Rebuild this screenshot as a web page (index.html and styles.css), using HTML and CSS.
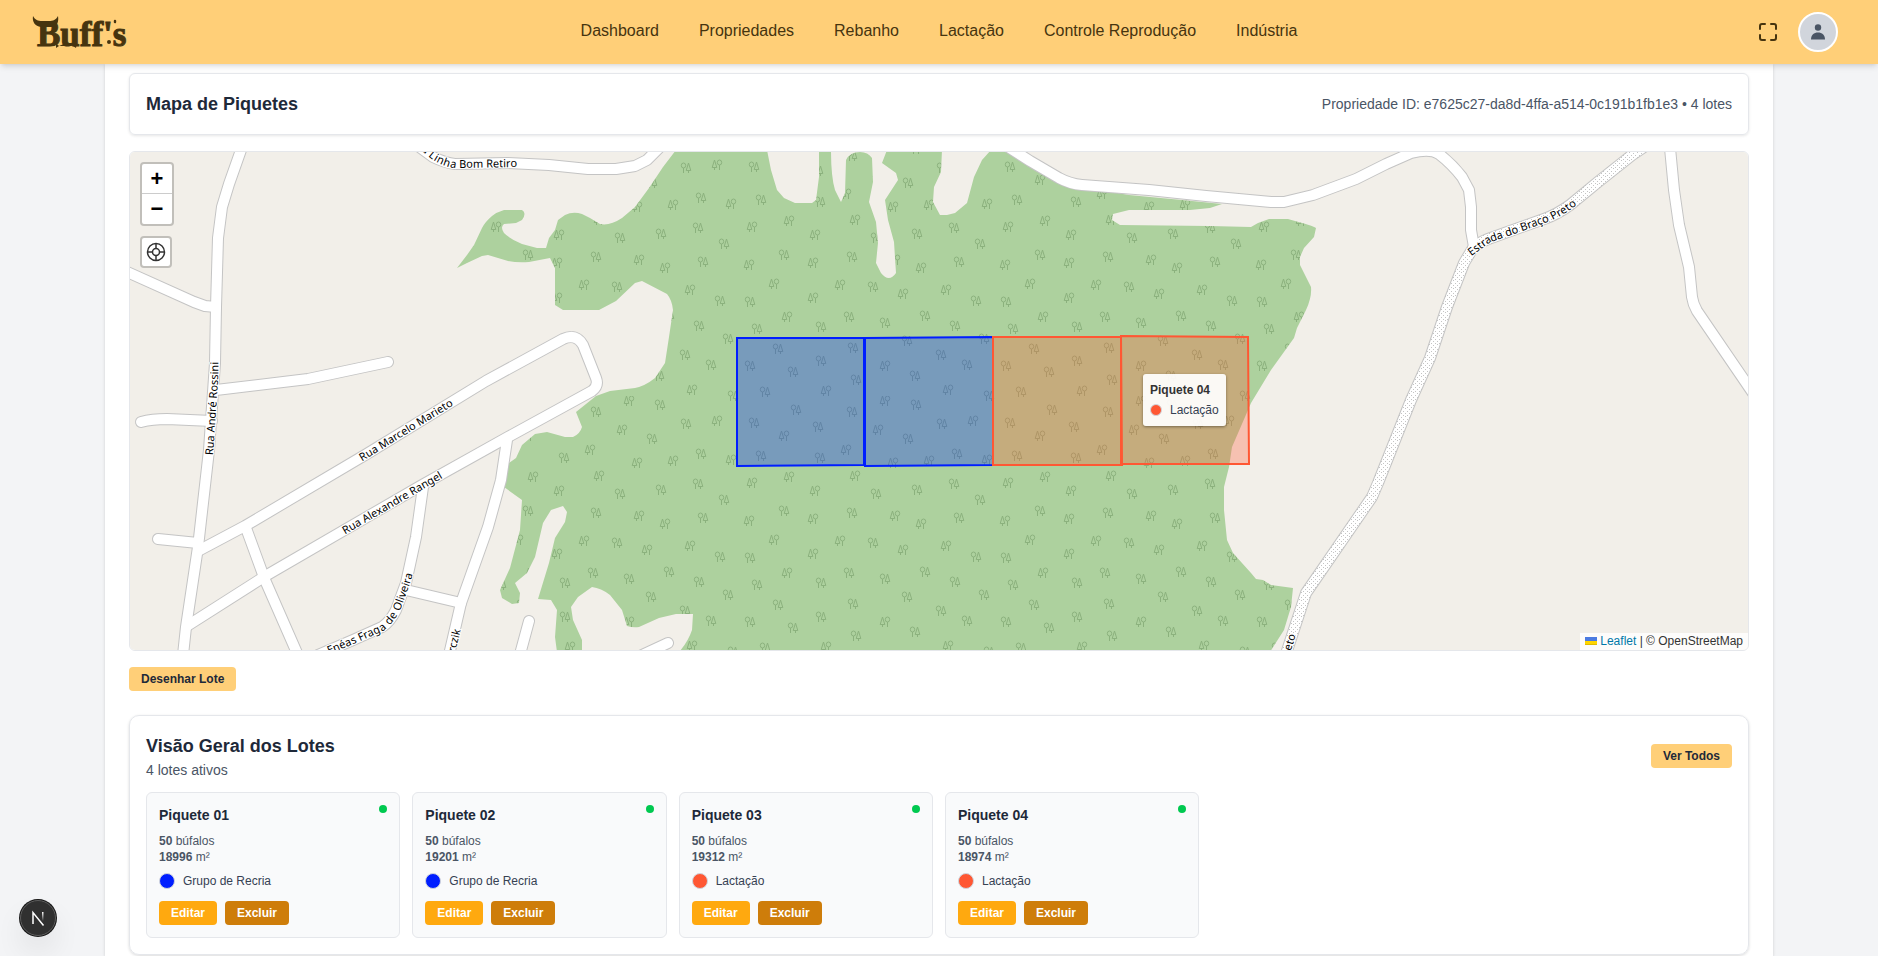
FILE: index.html
```html
<!DOCTYPE html>
<html lang="pt-BR">
<head>
<meta charset="utf-8">
<meta name="viewport" content="width=device-width, initial-scale=1">
<title>Buff's</title>
<link rel="stylesheet" href="styles.css">
</head>
<body>
<header class="topbar">
  <a class="logo" href="#" aria-label="Buff's">
    <svg width="100" height="44" viewBox="0 0 100 44">
      <path d="M1 6C3 10 6 11 10 11H17C21 11 24 10 26 6C27 12 25 16 21 17L9 17C3 16 0 12 1 6Z"/>
      <text x="5" y="36">Buff's</text>
      <path d="M24 33L27 36 34 33 41 36 45 33 44 38 41 36H27L24 38Z"/>
      <path d="M82 10q3-1 2 3-3 1-2-3zM75 32a2 2 0 1 0 4 0 2 2 0 1 0-4 0z"/>
    </svg>
  </a>
  <nav class="nav">
    <a href="#">Dashboard</a>
    <a href="#">Propriedades</a>
    <a href="#">Rebanho</a>
    <a href="#">Lactação</a>
    <a href="#">Controle Reprodução</a>
    <a href="#">Indústria</a>
  </nav>
  <div class="actions">
    <button class="icon-btn" type="button" aria-label="Tela cheia">
      <svg width="24" height="24" viewBox="0 0 24 24" fill="none" stroke="currentColor" stroke-width="2" stroke-linecap="round" stroke-linejoin="round"><path d="M9 4H6a2 2 0 0 0-2 2v3M15 4h3a2 2 0 0 1 2 2v3M4 15v3a2 2 0 0 0 2 2h3M20 15v3a2 2 0 0 1-2 2h-3"/></svg>
    </button>
    <button class="avatar" type="button" aria-label="Perfil">
      <svg width="18" height="18" viewBox="0 0 18 18" fill="currentColor"><circle cx="9" cy="4.5" r="3.2"/><path d="M2 16.5C2 12 5 9.500 9 9.500S16 12 16 16.500Z"/></svg>
    </button>
  </div>
</header>

<div class="page">
<main class="content">
  <section class="bar-card">
    <h2 class="title">Mapa de Piquetes</h2>
    <p class="muted">Propriedade ID: e7625c27-da8d-4ffa-a514-0c191b1fb1e3 • 4 lotes</p>
  </section>

  <section class="map" aria-label="Mapa">
    <svg class="map-canvas" viewBox="130 152 1618 498" preserveAspectRatio="xMidYMid slice">
      <defs>
        <g id="a"><ellipse cx="-2.500" cy="-2.500" rx="2.200" ry="2.500"/><path d="M-2.500 0V5M2.500 -5L0.200 2.500H4.800ZM2.500 2.500V5"/></g>
        <g id="b"><ellipse cx="2.500" cy="-2.500" rx="2.200" ry="2.500"/><path d="M2.500 0V5M-2.500 -5L-4.800 2.500H-0.200ZM-2.500 2.500V5"/></g>
        <pattern id="trees" width="256" height="256" patternUnits="userSpaceOnUse" patternTransform="translate(700 140)">
          <rect width="256" height="256" fill="#add19e"/>
          <g fill="none" stroke="#8bb17d" stroke-width="1">
            <use href="#a" x="28" y="199"/><use href="#a" x="207" y="201"/><use href="#a" x="78" y="209"/><use href="#a" x="153" y="208"/><use href="#a" x="241" y="215"/><use href="#a" x="121" y="221"/><use href="#a" x="11" y="225"/><use href="#a" x="50" y="226"/><use href="#a" x="93" y="232"/><use href="#a" x="156" y="240"/><use href="#a" x="215" y="236"/>
            <use href="#a" x="65" y="252"/><use href="#a" x="65" y="-4"/><use href="#a" x="33" y="0"/><use href="#a" x="33" y="256"/><use href="#a" x="216" y="9"/><use href="#a" x="96" y="14"/><use href="#a" x="152" y="16"/><use href="#a" x="54" y="27"/><use href="#a" x="118" y="31"/><use href="#a" x="242" y="28"/><use href="#a" x="208" y="43"/><use href="#a" x="61" y="60"/><use href="#a" x="120" y="62"/><use href="#a" x="1" y="58"/><use href="#a" x="257" y="58"/><use href="#a" x="254" y="88"/><use href="#a" x="-2" y="88"/>
            <use href="#a" x="176" y="98"/><use href="#a" x="217" y="94"/><use href="#a" x="24" y="104"/><use href="#a" x="84" y="115"/><use href="#a" x="152" y="117"/><use href="#a" x="3" y="122"/><use href="#a" x="259" y="122"/><use href="#a" x="173" y="147"/><use href="#a" x="20" y="161"/><use href="#a" x="50" y="162"/><use href="#a" x="149" y="177"/><use href="#a" x="225" y="176"/><use href="#a" x="185" y="183"/><use href="#a" x="121" y="187"/><use href="#a" x="57" y="189"/><use href="#a" x="255" y="186"/><use href="#a" x="-1" y="186"/>
            <use href="#b" x="185" y="226"/><use href="#b" x="126" y="251"/><use href="#b" x="248" y="250"/><use href="#b" x="185" y="5"/><use href="#b" x="17" y="25"/><use href="#b" x="178" y="34"/><use href="#b" x="84" y="40"/><use href="#b" x="146" y="54"/><use href="#b" x="31" y="64"/><use href="#b" x="229" y="65"/><use href="#b" x="193" y="67"/><use href="#b" x="52" y="87"/><use href="#b" x="89" y="81"/><use href="#b" x="155" y="80"/><use href="#b" x="115" y="95"/><use href="#b" x="49" y="125"/><use href="#b" x="113" y="123"/><use href="#b" x="195" y="120"/><use href="#b" x="221" y="128"/><use href="#b" x="74" y="144"/><use href="#b" x="140" y="145"/><use href="#b" x="246" y="150"/><use href="#b" x="203" y="154"/><use href="#b" x="113" y="158"/><use href="#b" x="87" y="177"/>
          </g>
        </pattern>
        <pattern id="gravel" width="8" height="8" patternUnits="userSpaceOnUse">
          <rect width="8" height="8" fill="#fff"/>
          <path d="M1 1h1v1h-1zM5 0h1v1h-1zM3 3h1v1h-1zM7 3h1v1h-1zM1 5h1v1h-1zM5 5h1v1h-1zM3 7h1v1h-1zM7 7h1v1h-1z" fill="#c4c4c4"/>
        </pattern>
        <g id="streets">
          <path d="M241 150L229 184 222 207 218 238 216 307 215 363 209 450 198 547 186 627 183 655"/>
          <path d="M125 271L194 302 205 306 216 307"/>
          <path d="M216 390L308 379 388 362"/>
          <path d="M141 422Q152 419 167 419L212 421"/>
          <path d="M158 539L198 543"/>
          <path d="M198 551L245 526 365 455 486 381 563 339Q576 333 583 345L596 378Q599 386 592 391L508 437 422 485 267 575 187 626"/>
          <path d="M246 528L265 580 297 653"/>
          <path d="M423 487L416 537 406 583 396 610Q390 622 382 627L353 640 318 655"/>
          <path d="M507 440L501 480 488 527 461 603 449 655"/>
          <path d="M406 590L461 603"/>
          <path d="M529 621L519 658"/>
          <path d="M668 643L640 656"/>
          <path d="M418 146L433 157Q445 163 455 164L508 163 549 165 588 169H616L635 166 647 160 660 147"/>
          <path d="M1005 145L1030 161 1059 178Q1070 184 1082 185L1149 190 1206 196 1271 202H1284L1313 195 1356 179 1386 164 1411 153Q1430 148 1439 154 1452 164 1462 177L1469 190 1471 207 1471 230 1474 247"/>
          <path d="M1670 148L1674 190 1679 225 1689 267 1692 297Q1693 304 1697 311L1755 396"/>
        </g>
        <path id="estrada" d="M1650 143L1632 155 1598 182 1570 205Q1556 215 1544 219L1488 239Q1480 242 1473 248L1464 263 1447 307 1430 358 1411 400 1378 483 1372 497 1317 577 1306 593 1284 660"/>
        <path id="l1" d="M209 455L214 380 215 340"/>
        <path id="l2" d="M360 458L482 383"/>
        <path id="l3" d="M343 531L471 457"/>
        <path id="l4" d="M415 140L433 155Q445 163 455 164L517 163"/>
        <path id="l5" d="M240 691L324 652 353 640 382 627Q390 620 396 610L406 583 409 573"/>
        <path id="l6" d="M439 698L457 629"/>
        <path id="l7" d="M1271 702L1292 634"/>
        <path id="l8" d="M1469 253L1488 239 1544 219Q1556 215 1570 205L1600 181"/>
      </defs>
      <rect x="130" y="152" width="1618" height="498" fill="#f2efe9"/>
      <path fill="url(#trees)" d="M676 150L663 167 649 188 635 207 622 218Q610 226 600 224L590 218 582 214Q573 211 565 215L558 220 555 230 549 238 546 248H537L522 244Q510 239 504 233 500 227 504 224L516 223 522 220Q527 213 522 210H504Q497 212 492 216 485 222 482 228L474 245 467 255 457 268 467 263 482 256 488 255 508 261Q518 263 529 262L550 258 555 268V305L563 310H599L616 301 635 283 642 281 667 294Q672 300 673 310L669 337 665 363 655 378Q645 386 635 388L610 391 596 396 576 412 582 427Q580 434 573 437H565L547 432 535 434 522 445 516 458 509 463 504 487 522 500 520 530 510 568 500 590 502 598 512 604 519 603 520 593 515 583 527 573 535 557 543 523 551 510 563 506 567 512 565 522 555 538 549 563 538 599 551 600 557 610 555 637 557 652H582L582 640 573 620 571 607 578 597 592 587Q601 588 610 595L622 610 627 626Q633 628 639 627L659 618 676 614 693 614 692 630Q688 642 679 652H1270L1284 630 1291 607 1293 588 1271 585 1263 580 1256 579 1251 573 1233 553 1227 540 1224 510V487L1229 467 1232 447 1245 417 1251 403 1271 370 1294 338 1297 328 1306 310Q1312 297 1311 287L1300 265V257L1304 248 1314 237 1316 228Q1314 226 1288 219H1269L1258 223 1251 227 1210 226 1120 225 1112 220 1113 214 1129 210H1190L1210 208 1222 204 1182 200 1129 195 1082 187 1059 178 1010 150H991L982 160 974 177 967 203 955 213 947 215H940L933 202 934 187 941 172 942 150H887L882 163 896 173 898 180 885 200 888 220 894 242 896 273Q889 283 881 273L876 263 878 243 876 222 869 202 873 182 872 158Q868 152 860 152 850 152 846 160L845 193 841 202 835 190Q831 177 831 150H819V177L816 200 812 203H795L784 198 777 190 771 170 767 150Z"/>
      <use href="#streets" class="casing"/><use href="#estrada" class="casing"/>
      <use href="#estrada" class="dirt"/><use href="#streets" class="road"/>
      <g class="street-name">
        <text dy="4"><textPath href="#l1">Rua André Rossini</textPath></text>
        <text dy="4"><textPath href="#l2">Rua Marcelo Marieto</textPath></text>
        <text dy="4"><textPath href="#l3">Rua Alexandre Rangel</textPath></text>
        <text dy="4" text-anchor="end"><textPath href="#l4" startOffset="100%">a Linha Bom Retiro</textPath></text>
        <text dy="4" text-anchor="end"><textPath href="#l5" startOffset="100%">Enéas Fraga de Oliveira</textPath></text>
        <text dy="4" text-anchor="end"><textPath href="#l6" startOffset="100%">rczik</textPath></text>
        <text dy="4" text-anchor="end"><textPath href="#l7" startOffset="100%">eto</textPath></text>
        <text dy="4"><textPath href="#l8">Estrada do Braço Preto</textPath></text>
      </g>
      <g class="lot recria">
        <path d="M737 338H864V465L737 466Z"/><path d="M865 338L993 337V465L865 466Z"/>
      </g>
      <g class="lot lactacao">
        <path d="M993 337H1121L1122 465H993Z"/><path d="M1121 336L1248 337 1249 464H1121Z"/>
      </g>
    </svg>
    <div class="map-controls">
      <div class="zoom">
        <button type="button" aria-label="Aproximar">+</button>
        <button type="button" aria-label="Afastar">−</button>
      </div>
      <button class="locate" type="button" aria-label="Centralizar">
        <svg width="20" height="20" viewBox="0 0 20 20" fill="none" stroke="#333" stroke-width="1.500"><circle cx="10" cy="10" r="8.500"/><circle cx="10" cy="10" r="3.500"/><path d="M10 1.500V6.500M10 13.500V18.500M1.500 10H6.500M13.500 10H18.500"/></svg>
      </button>
    </div>
    <div class="tooltip" role="tooltip">
      <strong>Piquete 04</strong>
      <span class="tooltip-row"><i class="swatch small orange"></i>Lactação</span>
    </div>
    <div class="attribution">
      <a href="#"><svg width="12" height="8" viewBox="0 0 12 8"><path fill="#4c7be1" d="M0 0h12v4H0z"/><path fill="#ffd500" d="M0 4h12v3H0z"/><path fill="#e0bc00" d="M0 7h12v1H0z"/></svg> Leaflet</a> | © OpenStreetMap
    </div>
  </section>

  <button class="btn soft draw" type="button">Desenhar Lote</button>

  <section class="overview">
    <div class="overview-head">
      <div>
        <h2 class="title">Visão Geral dos Lotes</h2>
        <p class="muted">4 lotes ativos</p>
      </div>
      <button class="btn soft" type="button">Ver Todos</button>
    </div>
    <div class="lots">
      <article class="lot-card">
        <div class="lot-head"><h3>Piquete 01</h3><i class="status"></i></div>
        <p class="facts"><b>50</b> búfalos<br><b>18996</b> m²</p>
        <p class="group"><i class="swatch blue"></i>Grupo de Recria</p>
        <div class="lot-actions"><button class="btn edit" type="button">Editar</button><button class="btn remove" type="button">Excluir</button></div>
      </article>
      <article class="lot-card">
        <div class="lot-head"><h3>Piquete 02</h3><i class="status"></i></div>
        <p class="facts"><b>50</b> búfalos<br><b>19201</b> m²</p>
        <p class="group"><i class="swatch blue"></i>Grupo de Recria</p>
        <div class="lot-actions"><button class="btn edit" type="button">Editar</button><button class="btn remove" type="button">Excluir</button></div>
      </article>
      <article class="lot-card">
        <div class="lot-head"><h3>Piquete 03</h3><i class="status"></i></div>
        <p class="facts"><b>50</b> búfalos<br><b>19312</b> m²</p>
        <p class="group"><i class="swatch orange"></i>Lactação</p>
        <div class="lot-actions"><button class="btn edit" type="button">Editar</button><button class="btn remove" type="button">Excluir</button></div>
      </article>
      <article class="lot-card">
        <div class="lot-head"><h3>Piquete 04</h3><i class="status"></i></div>
        <p class="facts"><b>50</b> búfalos<br><b>18974</b> m²</p>
        <p class="group"><i class="swatch orange"></i>Lactação</p>
        <div class="lot-actions"><button class="btn edit" type="button">Editar</button><button class="btn remove" type="button">Excluir</button></div>
      </article>
    </div>
  </section>
</main>
</div>

<button class="dev-badge" type="button" aria-label="Ferramentas">
  <svg width="16" height="16" viewBox="0 0 16 16" fill="none" stroke-width="1.500">
    <defs><linearGradient id="fade" x1="0" y1="0" x2="0" y2="1"><stop offset="0" stop-color="#fff"/><stop offset="1" stop-color="#fff" stop-opacity="0"/></linearGradient></defs>
    <path d="M3 14V2.500L13.500 15.500" stroke="#fff"/><rect x="12" y="2" width="1.500" height="9" fill="url(#fade)"/>
  </svg>
</button>
</body>
</html>
```
FILE: styles.css
```css
* { box-sizing: border-box; }
body {
  margin: 0;
  min-height: 100vh;
  display: flex;
  flex-direction: column;
  background: #f3f4f6;
  color: #1e2939;
  font-family: "Liberation Sans", Arial, sans-serif;
}
h2, h3, p { margin: 0; }
button { border: 0; padding: 0; background: none; font: inherit; color: inherit; cursor: pointer; }
a { text-decoration: none; color: inherit; }
svg { display: block; }

.topbar {
  position: sticky;
  top: 0;
  z-index: 10;
  height: 64px;
  padding: 0 40px 0 32px;
  display: grid;
  grid-template-columns: 1fr auto 1fr;
  align-items: center;
  background: #ffcf78;
  color: #46340f;
  box-shadow: 0 4px 6px -1px rgba(0, 0, 0, .1), 0 2px 4px -2px rgba(0, 0, 0, .1);
}
.logo text {
  font: bold 35px "Liberation Serif", serif;
  stroke: #46340f;
  stroke-width: 1;
}
.logo svg { fill: #46340f; }
.nav {
  display: flex;
  gap: 40px;
  padding: 0 0 2px 8px;
  font-size: 16px;
  line-height: 24px;
}
.actions { display: flex; align-items: center; justify-content: flex-end; gap: 14px; }
.icon-btn { padding: 4px; }
.avatar {
  width: 40px;
  height: 40px;
  border: 2px solid #fff;
  border-radius: 50%;
  background: #d1d5dc;
  color: #4a5565;
  display: grid;
  place-items: center;
}

.page { flex: 1; padding: 0 105px; display: flex; }
.content {
  flex: 1;
  min-width: 0;
  padding: 9px 24px 0;
  display: flex;
  flex-direction: column;
  background: #fff;
  box-shadow: 0 1px 3px rgba(0, 0, 0, .15);
}
.title { font-size: 18px; line-height: 28px; font-weight: bold; }
.muted { font-size: 14px; line-height: 20px; color: #4a5565; }

.bar-card {
  display: flex;
  align-items: center;
  justify-content: space-between;
  padding: 16px;
  margin-bottom: 16px;
  border: 1px solid #e5e7eb;
  border-radius: 6px;
  box-shadow: 0 1px 3px rgba(0, 0, 0, .1);
}

.map {
  position: relative;
  height: 500px;
  border: 1px solid #e5e7eb;
  border-radius: 6px;
  overflow: hidden;
}
.map-canvas { width: 100%; height: 100%; }
.casing, .road, .dirt { fill: none; stroke-linecap: round; stroke-linejoin: round; }
.casing { stroke: #c4c4c4; stroke-width: 12px; }
.road { stroke: #fff; stroke-width: 10px; }
.dirt { stroke: url(#gravel); stroke-width: 10px; }
.street-name text {
  font: 11px "Noto Sans", sans-serif;
  fill: #000;
  stroke: #fff;
  stroke-width: 2px;
  paint-order: stroke;
}
.lot { stroke-width: 2px; fill-opacity: .3; }
.recria { fill: #001eff; stroke: #001eff; }
.lactacao { fill: #ff5733; stroke: #ff5733; }

.map-controls {
  position: absolute;
  top: 10px;
  left: 10px;
  display: flex;
  flex-direction: column;
  align-items: flex-start;
  gap: 10px;
}
.zoom, .locate {
  border: 2px solid rgba(0, 0, 0, .2);
  border-radius: 4px;
  background: #fff;
  background-clip: padding-box;
}
.zoom { display: flex; flex-direction: column; }
.zoom button {
  width: 30px;
  height: 30px;
  color: #000;
  font: bold 22px/30px "Liberation Sans", Arial, sans-serif;
}
.zoom button:first-child { border-bottom: 1px solid #ccc; }
.locate { width: 32px; height: 32px; display: grid; place-items: center; }

.tooltip {
  position: absolute;
  top: 222px;
  left: calc(50% + 204px);
  padding: 6px 7px;
  display: flex;
  flex-direction: column;
  border-radius: 3px;
  background: rgba(255, 255, 255, .92);
  box-shadow: 0 1px 3px rgba(0, 0, 0, .4);
  color: #364153;
  font-size: 12px;
  line-height: 20px;
}
.tooltip strong { color: #333; }
.tooltip-row { display: flex; align-items: center; gap: 8px; }
.attribution {
  position: absolute;
  right: 0;
  bottom: 0;
  padding: 0 5px;
  background: rgba(255, 255, 255, .8);
  color: #333;
  font-size: 12px;
  line-height: 17px;
}
.attribution a { color: #0078a8; }
.attribution svg { display: inline; }

.btn {
  padding: 4px 12px;
  border-radius: 4px;
  font-size: 12px;
  line-height: 16px;
  font-weight: bold;
}
.soft { background: #ffcf78; color: #1e2939; }
.edit { background: #ffa90f; color: #fff; }
.remove { background: #ce7d0a; color: #fff; }
.draw { align-self: flex-start; margin: 16px 0 24px; }

.overview {
  padding: 16px;
  border: 1px solid #e5e7eb;
  border-radius: 10px;
  box-shadow: 0 1px 3px rgba(0, 0, 0, .15);
}
.overview-head {
  display: flex;
  align-items: center;
  justify-content: space-between;
  margin-bottom: 12px;
}
.lots { display: grid; grid-template-columns: repeat(6, 1fr); gap: 12px; }
.lot-card {
  padding: 12px;
  border: 1px solid #e5e7eb;
  border-radius: 6px;
  background: #f9fafb;
  font-size: 12px;
  line-height: 16px;
}
.lot-head { display: flex; justify-content: space-between; margin-bottom: 8px; }
.lot-head h3 { font-size: 14px; line-height: 20px; }
.status { width: 8px; height: 8px; border-radius: 50%; background: #00c950; }
.facts { color: #4a5565; margin-bottom: 8px; }
.group { display: flex; align-items: center; gap: 8px; color: #364153; margin-bottom: 12px; }
.swatch { width: 16px; height: 16px; border: 1px solid #d1d5dc; border-radius: 50%; }
.small { width: 12px; height: 12px; }
.blue { background: #001eff; }
.orange { background: #ff5733; }
.lot-actions { display: flex; gap: 8px; }

.dev-badge {
  position: fixed;
  left: 20px;
  bottom: 20px;
  width: 36px;
  height: 36px;
  border: 1px solid #5c5c5c;
  border-radius: 50%;
  display: grid;
  place-items: center;
  background: #303030;
  box-shadow: 0 0 0 1px #171717, 0 16px 32px -8px rgba(0, 0, 0, .24);
}
```
